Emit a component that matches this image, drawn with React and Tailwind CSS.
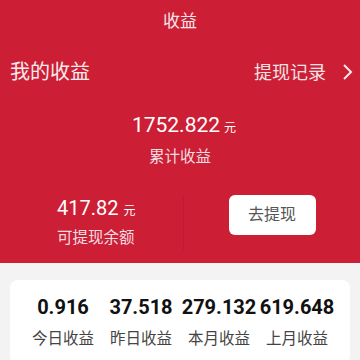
import React from 'react';

const stats = [
    { value: '0.916', label: '今日收益' },
    { value: '37.518', label: '昨日收益' },
    { value: '279.132', label: '本月收益' },
    { value: '619.648', label: '上月收益' },
];

const font = { fontFamily: 'Roboto, "Noto Sans CJK SC", sans-serif' };

const App = () => {
    return (
        <div className="w-[360px] h-[360px] overflow-hidden bg-[#f3f3f3]" style={font}>
            <div className="bg-[#cc1f35] h-[263px] text-white">
                <div className="h-[44px] flex items-center justify-center text-[17px] text-[#f6e6e8]">收益</div>

                <div className="h-[56px] flex items-center justify-between pl-[10px] pr-[6px]">
                    <span className="text-[20px] text-[#f7ecee]">我的收益</span>
                    <div className="flex items-center gap-[16px]">
                        <span className="text-[18px] text-[#f3e3e5]">提现记录</span>
                        <svg width="12" height="18" viewBox="0 0 12 18" fill="none">
                            <path d="M2 2l7 7-7 7" stroke="#f6e8ea" strokeWidth="2" />
                        </svg>
                    </div>
                </div>

                <div className="mt-[11px] flex flex-col items-center">
                    <div className="h-[28px] flex items-baseline gap-[4px] pl-[8px]">
                        <span className="text-[21px] leading-[28px]">1752.822</span>
                        <span className="text-[12px]">元</span>
                    </div>
                    <div className="mt-[7px] text-[15.5px] leading-[22px] text-[#f3dde0]">累计收益</div>
                </div>

                <div className="mt-[22px] flex">
                    <div className="w-[183px] pl-[57px] pt-[4px]">
                        <div className="h-[28px] flex items-baseline gap-[5px]">
                            <span className="text-[20px] leading-[28px]">417.82</span>
                            <span className="text-[12px]">元</span>
                        </div>
                        <div className="mt-[5px] text-[15.5px] leading-[22px] text-[#f3dde0]">可提现余额</div>
                    </div>
                    <div className="mt-[5px] w-px h-[55px] bg-[#bd1b2f]" />
                    <div className="flex-1 flex justify-center pt-[5px]">
                        <button className="w-[87px] h-[40px] bg-white rounded-[6px] text-[16px] text-[#555]">去提现</button>
                    </div>
                </div>
            </div>

            <div className="mx-[10px] mt-[17px] bg-white rounded-[8px] px-[14px] pt-[13px] pb-[14px]">
                <div className="grid grid-cols-4">
                    {stats.map((s) => (
                        <div key={s.label} className="flex flex-col items-center">
                            <span className="text-[20px] leading-[28px] font-bold text-[#111] whitespace-nowrap">{s.value}</span>
                            <span className="mt-[7px] text-[15.5px] leading-[22px] text-[#444] whitespace-nowrap">{s.label}</span>
                        </div>
                    ))}
                </div>
            </div>
        </div>
    );
};

export default App;
